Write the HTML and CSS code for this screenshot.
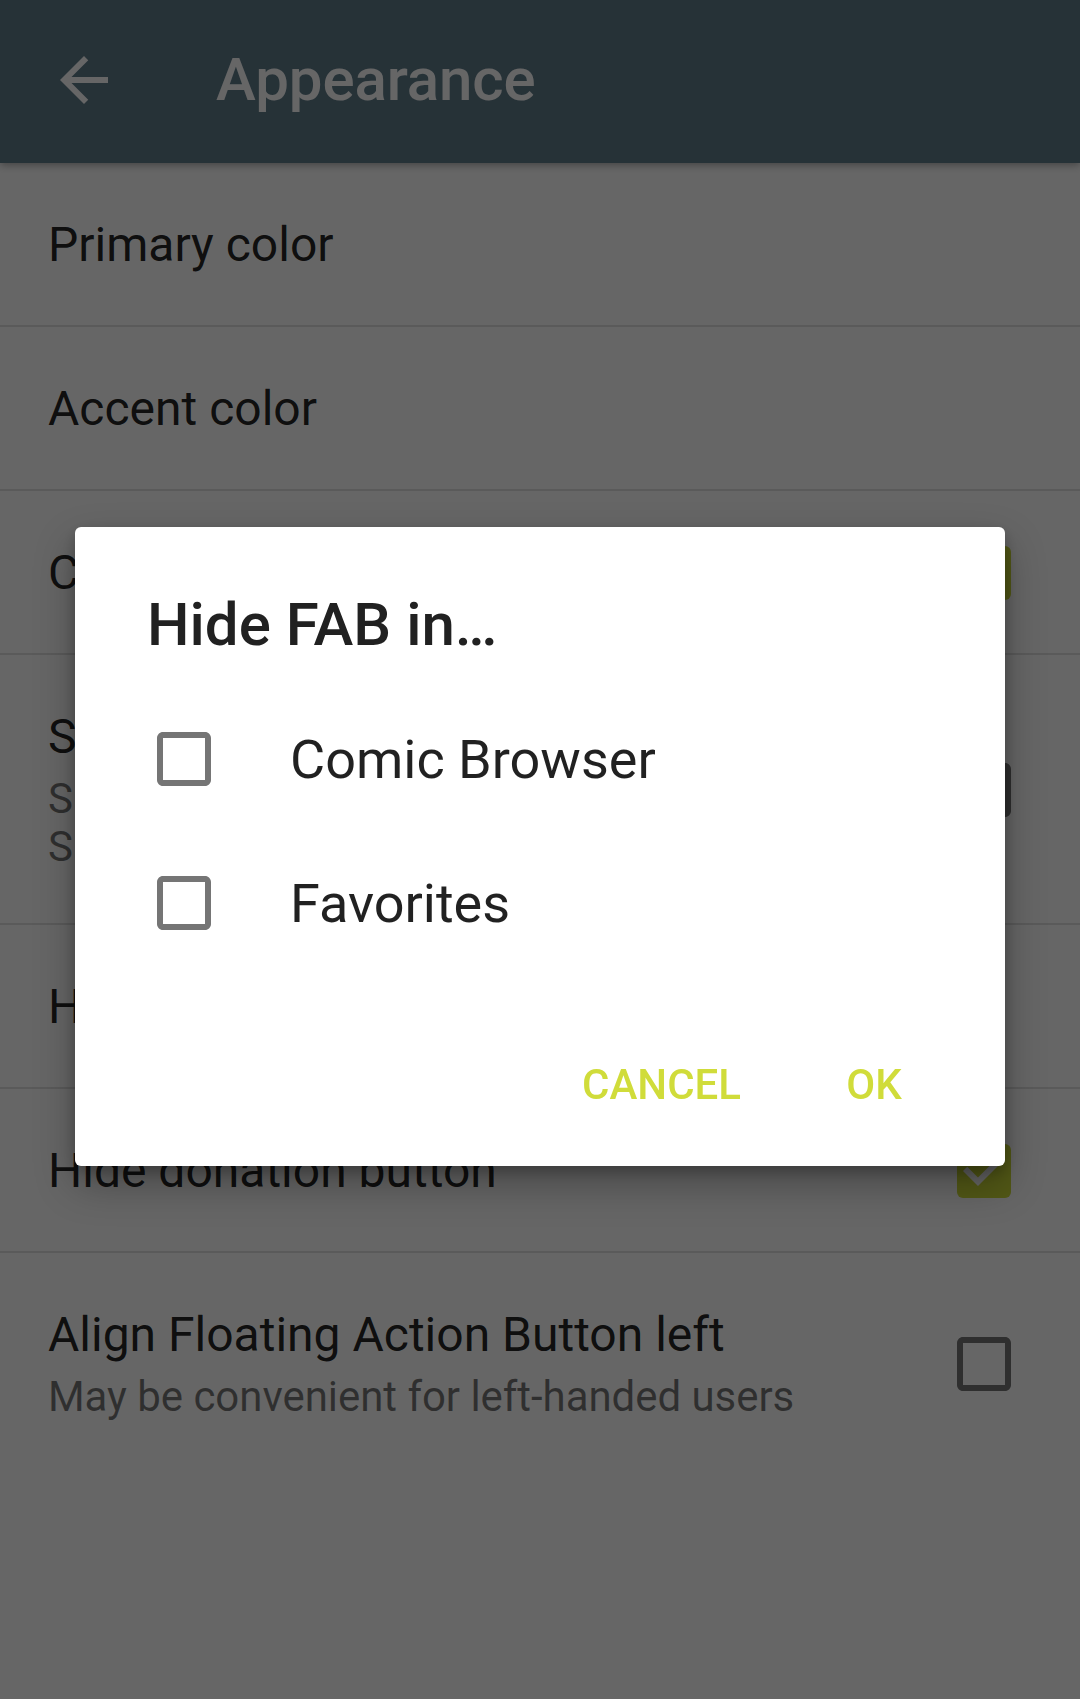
FILE: index.html
```html
<!DOCTYPE html>
<html lang="en">
<head>
<meta charset="utf-8">
<title>Appearance</title>
<link rel="stylesheet" href="styles.css">
</head>
<body>
<div class="app">
  <header class="toolbar">
    <svg class="nav-icon" viewBox="0 0 24 24" width="72" height="72" aria-hidden="true">
      <path d="M20 11H7.83l5.59-5.59L12 4l-8 8 8 8 1.41-1.41L7.83 13H20v-2z" fill="#fff"/>
    </svg>
    <h1 class="toolbar-title">Appearance</h1>
  </header>

  <ul class="prefs">
    <li class="pref"><div class="pref-text"><div class="pref-title">Primary color</div></div></li>
    <li class="pref"><div class="pref-text"><div class="pref-title">Accent color</div></div></li>
    <li class="pref">
      <div class="pref-text"><div class="pref-title">Colored navigation bar</div></div>
      <svg class="cb" viewBox="3 3 18 18" width="54" height="54" aria-hidden="true">
        <rect x="3" y="3" width="18" height="18" rx="2" fill="#cddc39"/>
        <path d="M10 17l-5-5 1.41-1.41L10 14.17l7.59-7.59L19 8l-9 9z" fill="#fff"/>
      </svg>
    </li>
    <li class="pref">
      <div class="pref-text">
        <div class="pref-title">Show comic titles</div>
        <div class="pref-summary">Shows the title of each comic in the list<br>Slower on older devices</div>
      </div>
      <svg class="cb" viewBox="3 3 18 18" width="54" height="54" aria-hidden="true">
        <path d="M19 5v14H5V5h14m0-2H5c-1.1 0-2 .9-2 2v14c0 1.1.9 2 2 2h14c1.1 0 2-.9 2-2V5c0-1.1-.9-2-2-2z" fill="#757575"/>
      </svg>
    </li>
    <li class="pref"><div class="pref-text"><div class="pref-title">Hide FAB in...</div></div></li>
    <li class="pref">
      <div class="pref-text"><div class="pref-title">Hide donation button</div></div>
      <svg class="cb" viewBox="3 3 18 18" width="54" height="54" aria-hidden="true">
        <rect x="3" y="3" width="18" height="18" rx="2" fill="#cddc39"/>
        <path d="M10 17l-5-5 1.41-1.41L10 14.17l7.59-7.59L19 8l-9 9z" fill="#fff"/>
      </svg>
    </li>
    <li class="pref">
      <div class="pref-text">
        <div class="pref-title">Align Floating Action Button left</div>
        <div class="pref-summary">May be convenient for left-handed users</div>
      </div>
      <svg class="cb" viewBox="3 3 18 18" width="54" height="54" aria-hidden="true">
        <path d="M19 5v14H5V5h14m0-2H5c-1.1 0-2 .9-2 2v14c0 1.1.9 2 2 2h14c1.1 0 2-.9 2-2V5c0-1.1-.9-2-2-2z" fill="#757575"/>
      </svg>
    </li>
  </ul>
</div>

<div class="scrim"></div>

<div class="dialog" role="dialog">
  <h2 class="dialog-title">Hide FAB in…</h2>
  <ul class="choices">
    <li class="choice">
      <svg class="choice-cb" viewBox="3 3 18 18" width="54" height="54" aria-hidden="true">
        <path d="M19 5v14H5V5h14m0-2H5c-1.1 0-2 .9-2 2v14c0 1.1.9 2 2 2h14c1.1 0 2-.9 2-2V5c0-1.1-.9-2-2-2z" fill="#757575"/>
      </svg>
      <span class="choice-label">Comic Browser</span>
    </li>
    <li class="choice">
      <svg class="choice-cb" viewBox="3 3 18 18" width="54" height="54" aria-hidden="true">
        <path d="M19 5v14H5V5h14m0-2H5c-1.1 0-2 .9-2 2v14c0 1.1.9 2 2 2h14c1.1 0 2-.9 2-2V5c0-1.1-.9-2-2-2z" fill="#757575"/>
      </svg>
      <span class="choice-label">Favorites</span>
    </li>
  </ul>
  <div class="actions">
    <span class="btn">CANCEL</span>
    <span class="btn">OK</span>
  </div>
</div>
</body>
</html>
```
FILE: styles.css
```css
html, body {
  margin: 0;
  padding: 0;
}
body {
  width: 1080px;
  height: 1699px;
  background: #ffffff;
  font-family: Roboto, "Noto Sans", "Liberation Sans", sans-serif;
  overflow: hidden;
}
.app {
  display: flex;
  flex-direction: column;
}
.toolbar {
  position: relative;
  z-index: 1;
  height: 163px;
  background: #607d8b;
  display: flex;
  align-items: center;
  box-shadow: 0 2px 8px rgba(0, 0, 0, 0.35);
}
.nav-icon {
  margin-left: 48px;
  margin-top: -3px;
  flex: none;
}
.toolbar-title {
  margin: 0 0 0 96px;
  font-size: 60px;
  font-weight: 500;
  color: #ffffff;
  line-height: 72px;
  margin-top: -4px;
  letter-spacing: -0.1px;
}
.prefs {
  list-style: none;
  margin: 0;
  padding: 0;
}
.pref {
  display: flex;
  align-items: center;
  padding: 54px 69px 52px 48px;
  border-bottom: 2px solid #e2e2e2;
}
.pref:last-child {
  border-bottom: none;
}
.pref-text {
  flex: 1;
  min-width: 0;
}
.pref-title {
  font-size: 48px;
  line-height: 56px;
  color: rgba(0, 0, 0, 0.87);
  white-space: nowrap;
}
.pref-summary {
  margin-top: 10px;
  font-size: 42px;
  line-height: 48px;
  color: rgba(0, 0, 0, 0.54);
  letter-spacing: -0.05px;
}
.cb {
  flex: none;
  display: block;
}
.scrim {
  position: fixed;
  inset: 0;
  background: rgba(0, 0, 0, 0.6);
  z-index: 5;
}
.dialog {
  position: absolute;
  z-index: 10;
  left: 75px;
  top: 527px;
  width: 930px;
  box-sizing: border-box;
  padding: 62px 0 28px;
  background: #ffffff;
  border-radius: 6px;
  box-shadow: 0 18px 40px rgba(0, 0, 0, 0.3), 0 6px 14px rgba(0, 0, 0, 0.22);
}
.dialog-title {
  margin: 0;
  padding: 0 72px;
  font-size: 60px;
  line-height: 72px;
  font-weight: 500;
  color: #212121;
}
.choices {
  list-style: none;
  margin: 26px 0 0;
  padding: 0;
}
.choice {
  height: 144px;
  display: flex;
  align-items: center;
  padding-left: 82px;
}
.choice-cb {
  flex: none;
  display: block;
}
.choice-label {
  margin-left: 79px;
  font-size: 54px;
  color: rgba(0, 0, 0, 0.87);
}
.actions {
  margin-top: 55px;
  display: flex;
  justify-content: flex-end;
  gap: 13px;
  padding-right: 35px;
}
.btn {
  height: 108px;
  min-width: 192px;
  box-sizing: border-box;
  padding: 0 24px;
  display: flex;
  align-items: center;
  justify-content: center;
  font-size: 42px;
  font-weight: 500;
  color: #d0dc3a;
}
```
